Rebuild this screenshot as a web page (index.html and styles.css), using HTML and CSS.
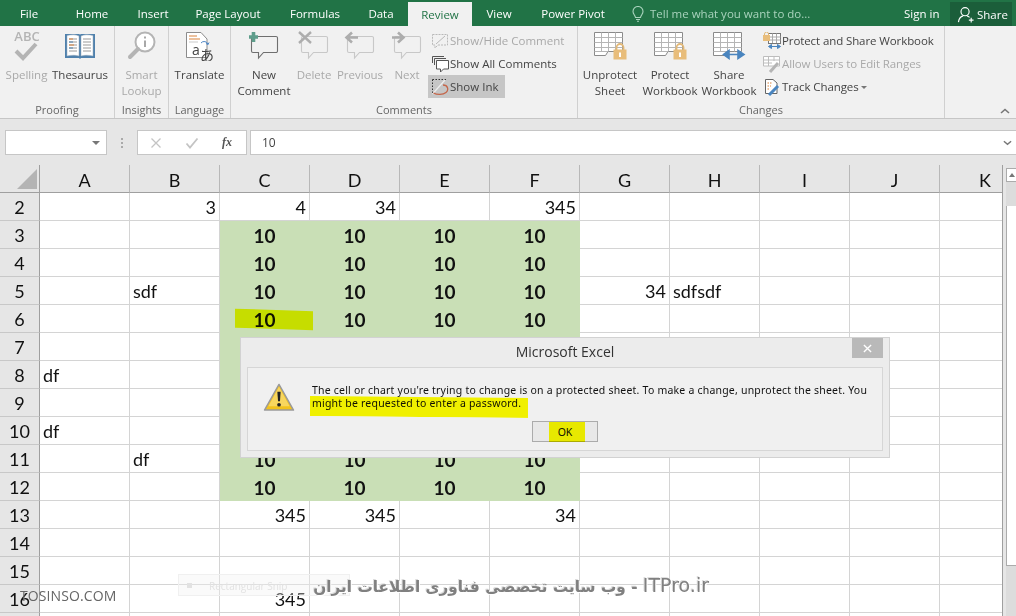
FILE: index.html
```html
<!DOCTYPE html>
<html lang="en">
<head>
<meta charset="utf-8">
<title>Microsoft Excel</title>
<link rel="stylesheet" href="styles.css">
</head>
<body>
<svg class="defs" width="0" height="0" aria-hidden="true">
  <defs>
    <symbol id="bubble" viewBox="0 0 32 30">
      <path d="M5 5.5H28a1.5 1.5 0 0 1 1.500 1.500V20a1.500 1.500 0 0 1-1.500 1.500H15.500L10.500 27V21.500H5a1.500 1.500 0 0 1-1.500-1.500V7A1.500 1.500 0 0 1 5 5.500Z" fill="none" stroke="currentColor" stroke-width="1.100"/>
    </symbol>
    <symbol id="sheet" viewBox="0 0 34 30">
      <path d="M1.500 1.500H29.500V20.500H15L12.500 24.500H1.500Z" fill="#fff" stroke="#8a8a8a"/>
      <path d="M1.500 6.500H29.500M1.500 11.500H29.500M1.500 16.500H29.500M1.500 20.500H15M8.500 1.500V20.500M15.500 1.500V20.500M22.500 1.500V20.500" fill="none" stroke="#b5b5b5"/>
    </symbol>
    <symbol id="lock" viewBox="0 0 14 17">
      <path d="M3.500 7V4.500a3.500 3.500 0 0 1 7 0V7" fill="none" stroke="#e2b877" stroke-width="1.800"/>
      <rect x="0.500" y="6.500" width="13" height="10" fill="#e8bd7b"/>
      <rect x="6" y="9.500" width="2" height="4.500" fill="#fff"/>
    </symbol>
  </defs>
</svg>
<div class="app">
  <nav class="tabs">
    <span class="tab tab-file">File</span>
    <span class="tab tab-home">Home</span>
    <span class="tab tab-insert">Insert</span>
    <span class="tab tab-layout">Page Layout</span>
    <span class="tab tab-formulas">Formulas</span>
    <span class="tab tab-data">Data</span>
    <span class="tab tab-review">Review</span>
    <span class="tab tab-view">View</span>
    <span class="tab tab-pivot">Power Pivot</span>
    <span class="tell">
      <svg class="bulb" viewBox="0 0 12 16" width="12" height="16"><path d="M3.500 11.500C3 9 1 8 1 5.500a5 5 0 0 1 10 0C11 8 9 9 8.500 11.500ZM4 13.500H8M5 15.200H7" fill="none" stroke="#a9d3bd" stroke-width="1.100"/></svg>
      Tell me what you want to do...
    </span>
    <span class="signin">Sign in</span>
    <span class="share">
      <svg viewBox="0 0 18 18" width="18" height="17"><circle cx="8" cy="6" r="4.300" fill="none" stroke="#fff" stroke-width="1.200"/><path d="M1 17c.5-4 3-6 5-6.500M10 10.500c1 .3 2 .8 2.800 1.500M14.500 12.500v5M12 15h5" fill="none" stroke="#fff" stroke-width="1.200"/></svg>
      Share
    </span>
  </nav>

  <section class="ribbon">
    <div class="group g-proofing">
      <div class="group-body">
        <div class="big w-spell off">
          <svg class="ico" viewBox="0 0 32 30" width="32" height="30"><text x="16" y="10" text-anchor="middle" class="abc">ABC</text><path d="M5 20L12 27L25 13" fill="none" stroke="#b4b4b4" stroke-width="4"/></svg>
          <span>Spelling</span>
        </div>
        <div class="big w-thes">
          <svg class="ico" viewBox="0 0 32 30" width="32" height="30"><path d="M1 3H15.500L16 4L16.500 3H31V27H17L16 28L15 27H1Z" fill="#4f81ad"/><path d="M3 4.500C7 3.500 12 3.500 15 5V25C12 24 7 24 3 25ZM29 4.500C25 3.500 20 3.500 17 5V25C20 24 25 24 29 25Z" fill="#fff" stroke="#9ab" stroke-width=".5"/><path d="M5 8H13M5 11H13M5 14H13M5 17H13M5 20H13M19 8H27M19 11H27M19 14H27M19 17H27M19 20H27" stroke="#999" fill="none"/><path d="M5 8H9M5 14H10" stroke="#d9823b"/><path d="M5 11H9M5 17H9" stroke="#4f81ad"/></svg>
          <span>Thesaurus</span>
        </div>
      </div>
      <div class="group-label">Proofing</div>
    </div>
    <div class="group g-insights">
      <div class="group-body">
        <div class="big w-smart off">
          <svg class="ico" viewBox="0 0 32 30" width="32" height="30"><circle cx="19" cy="11" r="9.500" fill="#fff" stroke="#b4b4b4" stroke-width="2"/><path d="M12 18L4 26" stroke="#b4b4b4" stroke-width="4" stroke-linecap="round"/><path d="M19 9.500V16M19 5.500V7.500" stroke="#a8a8a8" stroke-width="2"/></svg>
          <span>Smart Lookup</span>
        </div>
      </div>
      <div class="group-label">Insights</div>
    </div>
    <div class="group g-language">
      <div class="group-body">
        <div class="big w-trans">
          <svg class="ico" viewBox="0 0 32 30" width="32" height="30"><path d="M2.500 1.500H17L23 8V26.500H2.500Z" fill="#fff" stroke="#8c8c8c"/><path d="M5 5H13M5 8H16" stroke="#d9823b"/><path d="M5 11H14" stroke="#c9c9c9"/><path d="M17 12a4 4 0 0 1 7 1.500M24 13.500l-2-1M24 13.500l1-2" fill="none" stroke="#4f87c5"/><text x="8" y="24" class="tr-a">a</text><text x="16" y="29" class="tr-j">あ</text></svg>
          <span>Translate</span>
        </div>
      </div>
      <div class="group-label">Language</div>
    </div>
    <div class="group g-comments">
      <div class="group-body">
        <div class="big w-new">
          <svg class="ico c-dark" viewBox="0 0 32 30" width="32" height="30"><use href="#bubble"/><path d="M5.500 1V11M1 6H10" stroke="#5e9d8b" stroke-width="3.600"/></svg>
          <span>New Comment</span>
        </div>
        <div class="big w-del off">
          <svg class="ico c-light" viewBox="0 0 32 30" width="32" height="30"><use href="#bubble"/><path d="M1 1L13 12M13 1L1 12" stroke="#adadad" stroke-width="2.400"/></svg>
          <span>Delete</span>
        </div>
        <div class="big w-prev off">
          <svg class="ico c-light" viewBox="0 0 32 30" width="32" height="30"><use href="#bubble"/><path d="M14 6.500H3M8 1.500L2.500 6.500L8 11.500" fill="none" stroke="#adadad" stroke-width="2.600"/></svg>
          <span>Previous</span>
        </div>
        <div class="big w-next off">
          <svg class="ico c-light" viewBox="0 0 32 30" width="32" height="30"><use href="#bubble"/><path d="M1 6.500H12M7 1.500L12.500 6.500L7 11.500" fill="none" stroke="#adadad" stroke-width="2.600"/></svg>
          <span>Next</span>
        </div>
        <div class="stack s-comments">
          <div class="row off">
            <svg viewBox="0 0 18 18" width="18" height="18"><path d="M1.500 2.500H16.500V13H7L4 16V13H1.500Z" fill="none" stroke="#b9b9b9" stroke-dasharray="2 1"/><path d="M5 12L14 4" stroke="#b9b9b9"/></svg>
            <span>Show/Hide Comment</span>
          </div>
          <div class="row">
            <svg viewBox="0 0 18 18" width="18" height="18"><path d="M1.500 8V1.500H13M3.500 10V3.500H15" fill="none" stroke="#555"/><path d="M5.500 5.500H17.500V14H12.500L9.500 17V14H5.500Z" fill="#fff" stroke="#555"/></svg>
            <span>Show All Comments</span>
          </div>
          <div class="row row-on">
            <svg viewBox="0 0 18 18" width="18" height="18"><path d="M1.500 1.500H15M1.500 1.500V15" fill="none" stroke="#333" stroke-dasharray="1.500 1.500"/><path d="M1.500 16L14 2" stroke="#eee" stroke-width="1.200"/><path d="M12 7c5 0 6 5 3 7.500-3 2.500-9 2.500-12.500 .5" fill="none" stroke="#c5664a" stroke-width="1.300"/></svg>
            <span>Show Ink</span>
          </div>
        </div>
      </div>
      <div class="group-label">Comments</div>
    </div>
    <div class="group g-changes">
      <div class="group-body">
        <div class="big w-unprot">
          <svg class="ico" viewBox="0 0 34 30" width="34" height="30"><use href="#sheet"/><use href="#lock" x="20" y="12" width="14" height="17"/></svg>
          <span>Unprotect Sheet</span>
        </div>
        <div class="big w-prot">
          <svg class="ico" viewBox="0 0 34 30" width="34" height="30"><use href="#sheet"/><use href="#lock" x="20" y="12" width="14" height="17"/></svg>
          <span>Protect Workbook</span>
        </div>
        <div class="big w-share">
          <svg class="ico" viewBox="0 0 34 30" width="34" height="30"><use href="#sheet"/><path d="M13 23.500H30M17 19.500L11.500 23.500L17 27.500ZM26 19.500L32 23.500L26 27.500Z" fill="#4a85bf" stroke="#4a85bf" stroke-width="1.600"/></svg>
          <span>Share Workbook</span>
        </div>
        <div class="stack s-changes">
          <div class="row">
            <svg viewBox="0 0 18 18" width="18" height="18"><rect x="5.500" y="1.500" width="12" height="10" fill="#fff" stroke="#777"/><path d="M5.500 5H17.500M5.500 8H17.500M9.500 1.500V11M13.500 1.500V11" stroke="#aaa"/><rect x="0" y="3" width="7" height="6" fill="#e8bd7b"/><path d="M1.500 3V2a2 2 0 0 1 4 0V3" fill="none" stroke="#e2b877"/><path d="M6 14.500H17M8.500 12.500L5.500 14.500L8.500 16.500ZM14.500 12.500L17.500 14.500L14.500 16.500Z" fill="#4a85bf" stroke="#4a85bf"/></svg>
            <span>Protect and Share Workbook</span>
          </div>
          <div class="row off">
            <svg viewBox="0 0 18 18" width="18" height="18"><path d="M.5 1.500H16.500V11H.5ZM.5 5H16.500M.5 8H9M5.500 1.500V11M11 1.500V6" fill="#fff" stroke="#bdbdbd"/><path d="M7 17L15 8" stroke="#b4b4b4" stroke-width="3"/></svg>
            <span>Allow Users to Edit Ranges</span>
          </div>
          <div class="row">
            <svg viewBox="0 0 18 18" width="18" height="18"><path d="M2.500 1.500H10L14 5V15.500H2.500Z" fill="#fff" stroke="#666"/><path d="M4.500 5H9M4.500 8H8M4.500 11H7" stroke="#d9823b" stroke-dasharray="1.500 1"/><path d="M6 17L15 8" stroke="#4a85bf" stroke-width="3"/></svg>
            <span>Track Changes</span><i class="caret"></i>
          </div>
        </div>
      </div>
      <div class="group-label">Changes</div>
    </div>
    <div class="group g-end">
      <svg class="collapse" viewBox="0 0 10 6" width="10" height="6"><path d="M1 5L5 1.500L9 5" fill="none" stroke="#777" stroke-width="1.600"/></svg>
    </div>
  </section>

  <section class="fbar">
    <div class="namebox"><i class="caret caret-dark"></i></div>
    <div class="dots"></div>
    <div class="fxbox">
      <svg viewBox="0 0 12 12" width="12" height="12"><path d="M1.500 1.500L10.500 10.500M10.500 1.500L1.500 10.500" stroke="#c4c4c4" stroke-width="1.300"/></svg>
      <svg viewBox="0 0 14 12" width="14" height="12"><path d="M1.500 6.500L5 10.500L12.500 1.500" fill="none" stroke="#c4c4c4" stroke-width="1.800"/></svg>
      <em>fx</em>
    </div>
    <div class="finput">10
      <svg class="fdown" viewBox="0 0 10 6" width="9" height="6"><path d="M1 1L5 4.500L9 1" fill="none" stroke="#777" stroke-width="1.600"/></svg>
    </div>
  </section>

  <section class="sheet">
    <div class="gridwrap">
      <table class="grid">
        <thead>
          <tr><th class="corner"><i class="tri"></i></th><th>A</th><th>B</th><th>C</th><th>D</th><th>E</th><th>F</th><th>G</th><th>H</th><th>I</th><th>J</th><th>K</th></tr>
        </thead>
        <tbody>
          <tr><th>2</th><td></td><td class="n">3</td><td class="n">4</td><td class="n">34</td><td></td><td class="n">345</td><td></td><td></td><td></td><td></td><td></td></tr>
          <tr><th>3</th><td></td><td></td><td class="g">10</td><td class="g">10</td><td class="g">10</td><td class="g">10</td><td></td><td></td><td></td><td></td><td></td></tr>
          <tr><th>4</th><td></td><td></td><td class="g">10</td><td class="g">10</td><td class="g">10</td><td class="g">10</td><td></td><td></td><td></td><td></td><td></td></tr>
          <tr><th>5</th><td></td><td>sdf</td><td class="g">10</td><td class="g">10</td><td class="g">10</td><td class="g">10</td><td class="n">34</td><td>sdfsdf</td><td></td><td></td><td></td></tr>
          <tr><th>6</th><td></td><td></td><td class="g">10</td><td class="g">10</td><td class="g">10</td><td class="g">10</td><td></td><td></td><td></td><td></td><td></td></tr>
          <tr><th>7</th><td></td><td></td><td class="g"></td><td class="g"></td><td class="g"></td><td class="g"></td><td></td><td></td><td></td><td></td><td></td></tr>
          <tr><th>8</th><td>df</td><td></td><td class="g"></td><td class="g"></td><td class="g"></td><td class="g"></td><td></td><td></td><td></td><td></td><td></td></tr>
          <tr><th>9</th><td></td><td></td><td class="g"></td><td class="g"></td><td class="g"></td><td class="g"></td><td></td><td></td><td></td><td></td><td></td></tr>
          <tr><th>10</th><td>df</td><td></td><td class="g"></td><td class="g"></td><td class="g"></td><td class="g"></td><td></td><td></td><td></td><td></td><td></td></tr>
          <tr><th>11</th><td></td><td>df</td><td class="g">10</td><td class="g">10</td><td class="g">10</td><td class="g">10</td><td></td><td></td><td></td><td></td><td></td></tr>
          <tr><th>12</th><td></td><td></td><td class="g">10</td><td class="g">10</td><td class="g">10</td><td class="g">10</td><td></td><td></td><td></td><td></td><td></td></tr>
          <tr><th>13</th><td></td><td></td><td class="n">345</td><td class="n">345</td><td></td><td class="n">34</td><td></td><td></td><td></td><td></td><td></td></tr>
          <tr><th>14</th><td></td><td></td><td></td><td></td><td></td><td></td><td></td><td></td><td></td><td></td><td></td></tr>
          <tr><th>15</th><td></td><td></td><td></td><td></td><td></td><td></td><td></td><td></td><td></td><td></td><td></td></tr>
          <tr><th>16</th><td></td><td></td><td class="n">345</td><td></td><td></td><td></td><td></td><td></td><td></td><td></td><td></td></tr>
          <tr><th></th><td></td><td></td><td></td><td></td><td></td><td></td><td></td><td></td><td></td><td></td><td></td></tr>
        </tbody>
      </table>
    </div>
    <aside class="vscroll">
      <div class="sb-up"><i></i></div>
      <div class="sb-track"></div>
      <div class="sb-thumb"></div>
      <div class="sb-rest"></div>
    </aside>
  </section>

  <i class="mark mark-cell"></i>

  <div class="dialog">
    <header class="dlg-title">Microsoft Excel<span class="dlg-close"><svg viewBox="0 0 10 10" width="9" height="9"><path d="M1 1L9 9M9 1L1 9" stroke="#fff" stroke-width="1.500"/></svg></span></header>
    <div class="dlg-panel">
      <div class="dlg-msg">
        <svg class="warn" viewBox="0 0 32 30" width="32" height="29"><path d="M16 1.500L31 28H1Z" fill="#f2c21d" stroke="#9a9a9a" stroke-width="1.500" stroke-linejoin="round"/><path d="M16 4L27 24H5Z" fill="#fbe38a" opacity=".6"/><path d="M14.300 9H17.700L17 19H15Z" fill="#222"/><circle cx="16" cy="22.500" r="1.900" fill="#222"/></svg>
        <p>The cell or chart you're trying to change is on a protected sheet. To make a change, unprotect the sheet. You might be requested to enter a password.</p>
      </div>
      <div class="dlg-actions"><button class="dlg-ok" type="button">OK</button></div>
    </div>
    <i class="mark mark-msg"></i>
    <i class="mark mark-ok"></i>
  </div>

  <div class="snip"><i></i>Rectangular Snip</div>
  <div class="wm-ar" dir="rtl"><span class="wm-lat">ITPro.ir</span> - وب سایت تخصصی فناوری اطلاعات ایران</div>
  <div class="wm-to">TOSINSO.COM</div>
</div>
</body>
</html>
```
FILE: styles.css
```css
* { box-sizing: border-box; }
html, body { margin: 0; padding: 0; width: 1016px; height: 616px; overflow: hidden; background: #fff; }
body { font-family: "Open Sans", "Noto Sans", sans-serif; color: #444; }
.defs { position: absolute; }
.app { position: relative; width: 1016px; height: 616px; overflow: hidden; display: flex; flex-direction: column; }

/* tabs */
.tabs { height: 26px; flex: none; background: #217346; color: #fff; display: flex; align-items: flex-end; font-size: 11.500px; }
.tab { height: 26px; display: flex; align-items: center; justify-content: center; padding-top: 1px; flex: none; }
.tab-file { width: 58px; }
.tab-home { width: 68px; }
.tab-insert { width: 54px; }
.tab-layout { width: 96px; }
.tab-formulas { width: 78px; }
.tab-data { width: 54px; }
.tab-review { width: 64px; height: 24px; padding-top: 0; background: #f1f1f1; color: #217346; }
.tab-view { width: 54px; }
.tab-pivot { width: 94px; }
.tell { flex: 1; height: 26px; display: flex; align-items: center; gap: 6px; padding: 1px 0 0 12px; color: #a9d3bd; }
.signin { height: 26px; display: flex; align-items: center; padding: 1px 0 0 8px; width: 54px; flex: none; }
.share { width: 62px; height: 24px; margin-right: 4px; flex: none; background: #1b5e3a; display: flex; align-items: center; gap: 2px; padding-left: 7px; }

/* ribbon */
.ribbon { height: 93px; flex: none; background: #f1f1f1; border-bottom: 1px solid #c6c6c6; display: flex; }
.group { height: 92px; display: flex; flex-direction: column; border-right: 1px solid #d0d0d0; flex: none; position: relative; }
.g-proofing { width: 115px; }
.g-insights { width: 54px; }
.g-language { width: 62px; }
.g-comments { width: 347px; }
.g-changes { width: 367px; }
.g-end { flex: 1; border-right: 0; position: relative; }
.collapse { position: absolute; right: 6px; bottom: 4px; }
.group-body { flex: 1; display: flex; padding-top: 5px; }
.group-label { height: 15px; line-height: 14px; font-size: 11px; text-align: center; color: #666; }
.big { display: flex; flex-direction: column; align-items: center; font-size: 11.500px; line-height: 16px; text-align: center; flex: none; color: #444; }
.big span { display: block; margin-top: 6px; }
.big .ico { display: block; }
.off, .off span { color: #a9a9a9; }
.w-spell { width: 53px; }
.w-thes { width: 54px; }
.w-smart { width: 53px; }
.w-trans { width: 61px; }
.w-new { width: 66px; }
.w-del { width: 34px; }
.w-prev { width: 58px; }
.w-next { width: 36px; margin-right: 3px; }
.w-unprot { width: 64px; }
.w-prot { width: 56px; }
.w-share { width: 62px; }
.w-new span { width: 60px; }
.w-unprot span, .w-prot span, .w-share span { width: 60px; flex: none; }
.c-dark { color: #6f6f6f; }
.c-light { color: #c8c8c8; }
.stack { display: flex; flex-direction: column; flex: none; margin-top: -2px; }
.s-comments { width: 146px; }
.s-changes { letter-spacing: -.1px; }
.row { height: 23px; display: flex; align-items: center; gap: 1px; padding-left: 3px; font-size: 11.500px; white-space: nowrap; color: #444; }
.row svg { flex: none; }
.row-on { background: #c6c6c6; width: 77px; }
.abc { font: 600 13px "Open Sans", sans-serif; fill: #b4b4b4; }
.tr-a { font: 14px "Open Sans", sans-serif; fill: #444; }
.tr-j { font: 14px "Noto Sans CJK JP", sans-serif; fill: #444; }
.caret { display: inline-block; width: 0; height: 0; margin-left: 1px; margin-top: 1px; border: 3px solid transparent; border-top: 3px solid #777; border-bottom: 0; }

/* formula bar */
.fbar { height: 46px; flex: none; background: #e6e6e6; display: flex; align-items: flex-start; padding-top: 11px; padding-left: 5px; }
.namebox { width: 102px; height: 25px; background: #fff; border: 1px solid #c6c6c6; display: flex; align-items: center; justify-content: flex-end; padding-right: 6px; }
.caret-dark { border-width: 4px 4px 0; border-top-color: #777; margin: 0; }
.dots { width: 30px; height: 10px; margin-top: 8px; position: relative; }
.dots::before { content: ""; position: absolute; left: 14px; top: 0; width: 2px; height: 10px; background: repeating-linear-gradient(#aaa 0 2px, transparent 2px 4px); }
.fxbox { width: 110px; height: 25px; background: #fff; border: 1px solid #c6c6c6; display: flex; align-items: center; gap: 23px; padding-left: 12px; }
.fxbox em { font: italic 700 12px "Liberation Serif", serif; color: #555; }
.finput { flex: 1; margin-left: 3px; height: 25px; background: #fff; border: 1px solid #c6c6c6; border-right: 0; font-size: 12px; color: #444; display: flex; align-items: center; justify-content: space-between; padding: 0 4px 0 11px; }

/* sheet */
.sheet { flex: 1; display: flex; min-height: 0; background: #e6e6e6; }
.gridwrap { width: 1003px; height: 451px; flex: none; overflow: hidden; border-right: 1px solid #9f9f9f; }
.grid { border-collapse: separate; border-spacing: 0; table-layout: fixed; width: 1030px; font-family: Lato, "Liberation Sans", sans-serif; font-size: 18px; color: #111; background: #fff; }
.grid th { font-weight: 400; background: #e6e6e6; padding: 0; text-align: center; border-right: 1px solid #c2c2c2; border-bottom: 1px solid #c8c8c8; width: 90px; }
.grid thead th { height: 28px; border-bottom: 1px solid #9f9f9f; border-right: 1px solid #b8b8b8; padding-top: 2px; }
.grid thead th:last-child { border-right: 0; }
.grid .corner { width: 40px; position: relative; border-right: 1px solid #9f9f9f; }
.tri { position: absolute; right: 2px; bottom: 3px; width: 0; height: 0; border-style: solid; border-width: 0 0 20px 20px; border-color: transparent transparent #b4b4b4 transparent; }
.grid tbody th { width: 40px; border-right: 1px solid #9f9f9f; }
.grid td { height: 28px; padding: 1px 3px 0 3px; border-right: 1px solid #d4d4d4; border-bottom: 1px solid #d4d4d4; white-space: nowrap; overflow: hidden; }
.grid td.n { text-align: right; }
.grid td.g { background: #c9dfb6; text-align: center; font-weight: 700; font-size: 19px; border-color: #c9dfb6; }
.vscroll { flex: 1; display: flex; flex-direction: column; padding-left: 3px; padding-top: 3px; }
.sb-up { height: 14px; background: #fff; border: 1px solid #ababab; border-right: 0; display: flex; align-items: center; justify-content: center; flex: none; }
.sb-up i { width: 0; height: 0; border-style: solid; border-width: 0 3px 4px; border-color: transparent transparent #777; }
.sb-track { height: 24px; background: #dcdcdc; flex: none; }
.sb-thumb { height: 360px; background: #fff; border-left: 1px solid #ababab; border-bottom: 1px solid #ababab; flex: none; }
.sb-rest { flex: 1; background: #dcdcdc; }

/* annotations */
.mark { position: absolute; display: block; }
.mark-cell { left: 235px; top: 310px; width: 78px; height: 19px; background: #c6dd00; mix-blend-mode: darken; transform: skewY(2deg); }
.dialog { position: absolute; left: 240px; top: 337px; width: 650px; height: 121px; background: #ececec; border: 1px solid #d2d2d2; display: flex; flex-direction: column; align-items: stretch; padding: 0 6px 6px; }
.dlg-title { height: 29px; flex: none; text-align: center; font-size: 14px; line-height: 28px; color: #333; position: relative; }
.dlg-close { position: absolute; right: 0; top: 0; width: 31px; height: 20px; background: #b9b9b9; display: flex; align-items: center; justify-content: center; }
.dlg-panel { flex: 1; background: #f0f0f0; border: 1px solid #d6d6d6; display: flex; flex-direction: column; }
.dlg-msg { display: flex; padding: 15px 10px 0 15px; gap: 17px; flex: none; }
.warn { flex: none; }
.dlg-msg p { margin: 1px 0 0; font-family: "Noto Sans", sans-serif; font-size: 10.500px; line-height: 13px; color: #111; letter-spacing: .21px; }
.dlg-actions { display: flex; justify-content: flex-end; padding: 9px 284px 0 0; }
.dlg-ok { position: relative; z-index: 1; width: 66px; height: 21px; padding: 0; background: #e8e8e8; border: 1px solid #ababab; font: 10.500px "Noto Sans", sans-serif; color: #111; }
.mark-msg { left: 69px; top: 59px; width: 218px; height: 20px; background: #f4f400; mix-blend-mode: darken; transform: skewY(.5deg); z-index: 2; }
.mark-ok { left: 308px; top: 84px; width: 36px; height: 20px; background: #f4f400; mix-blend-mode: darken; z-index: 2; }

/* watermarks */
.snip { position: absolute; left: 178px; top: 574px; width: 172px; height: 22px; background: rgba(240,240,240,.35); border: 1px solid #f0f0f0; font: 10px "Open Sans", sans-serif; color: #e2e2e2; padding: 4px 0 0 30px; }
.snip i { position: absolute; left: 8px; top: 8px; width: 5px; height: 5px; background: #e2e2e2; }
.wm-ar { position: absolute; left: 300px; top: 574px; width: 409px; font: 700 15.300px "DejaVu Sans", sans-serif; color: #808080; text-shadow: 1px 1px 0 #fff, -1px -1px 0 #ddd; white-space: nowrap; }
.wm-lat { font-size: 19px; font-weight: 400; }
.wm-to { position: absolute; left: 20px; top: 586px; font: 14px "Open Sans", sans-serif; color: #666; letter-spacing: .1px; }
```
